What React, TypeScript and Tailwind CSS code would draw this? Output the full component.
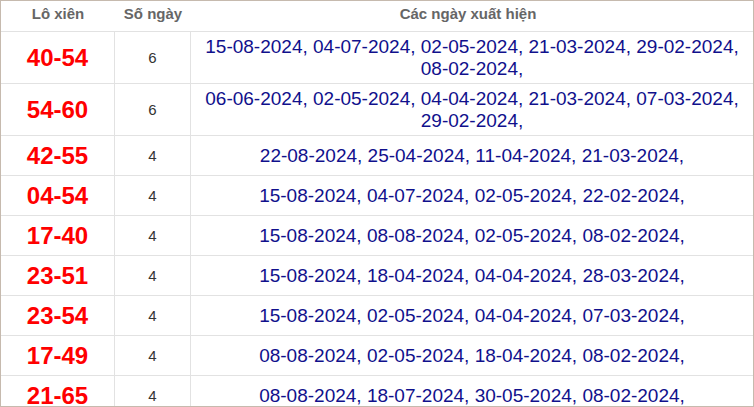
import React from "react";

const rows: { pair: string; n: number; dates: string[]; tall?: boolean }[] = [
  { pair: "40-54", n: 6, tall: true, dates: ["15-08-2024", "04-07-2024", "02-05-2024", "21-03-2024", "29-02-2024", "08-02-2024"] },
  { pair: "54-60", n: 6, tall: true, dates: ["06-06-2024", "02-05-2024", "04-04-2024", "21-03-2024", "07-03-2024", "29-02-2024"] },
  { pair: "42-55", n: 4, dates: ["22-08-2024", "25-04-2024", "11-04-2024", "21-03-2024"] },
  { pair: "04-54", n: 4, dates: ["15-08-2024", "04-07-2024", "02-05-2024", "22-02-2024"] },
  { pair: "17-40", n: 4, dates: ["15-08-2024", "08-08-2024", "02-05-2024", "08-02-2024"] },
  { pair: "23-51", n: 4, dates: ["15-08-2024", "18-04-2024", "04-04-2024", "28-03-2024"] },
  { pair: "23-54", n: 4, dates: ["15-08-2024", "02-05-2024", "04-04-2024", "07-03-2024"] },
  { pair: "17-49", n: 4, dates: ["08-08-2024", "02-05-2024", "18-04-2024", "08-02-2024"] },
  { pair: "21-65", n: 4, dates: ["08-08-2024", "18-07-2024", "30-05-2024", "08-02-2024"] },
];

export default function App() {
  return (
    <div
      className="w-[754px] h-[407px] overflow-hidden border border-[#c6baae] bg-white"
      style={{ fontFamily: '"Liberation Sans", Arial, sans-serif' }}
    >
      <div className="flex h-[31px] border-b border-[#e2e2e2] text-[15px] font-bold text-[#666666]">
        <div className="w-[114px] flex items-center justify-center pb-[4px]">Lô xiên</div>
        <div className="w-[76px] flex items-center justify-center pb-[4px]">Số ngày</div>
        <div className="flex-1 flex items-center justify-center pb-[4px] pr-[8px]">Các ngày xuất hiện</div>
      </div>
      {rows.map((r) => (
        <div
          key={r.pair}
          className={`flex border-b border-[#e2e2e2] ${r.tall ? "h-[52px]" : "h-[40px]"}`}
        >
          <div className="w-[114px] shrink-0 flex items-center justify-center border-r border-[#e2e2e2] text-[24px] font-bold text-[#ff0000]">
            {r.pair}
          </div>
          <div className="w-[76px] shrink-0 flex items-center justify-center border-r border-[#e2e2e2] text-[15px] text-[#333333] pt-[1px]">
            {r.n}
          </div>
          <div className="flex-1 flex items-center justify-center px-[6px] text-center text-[19px] leading-[22px] text-[#10108c]">
            <span>{r.dates.map((d) => d + ",").join(" ")}</span>
          </div>
        </div>
      ))}
    </div>
  );
}
